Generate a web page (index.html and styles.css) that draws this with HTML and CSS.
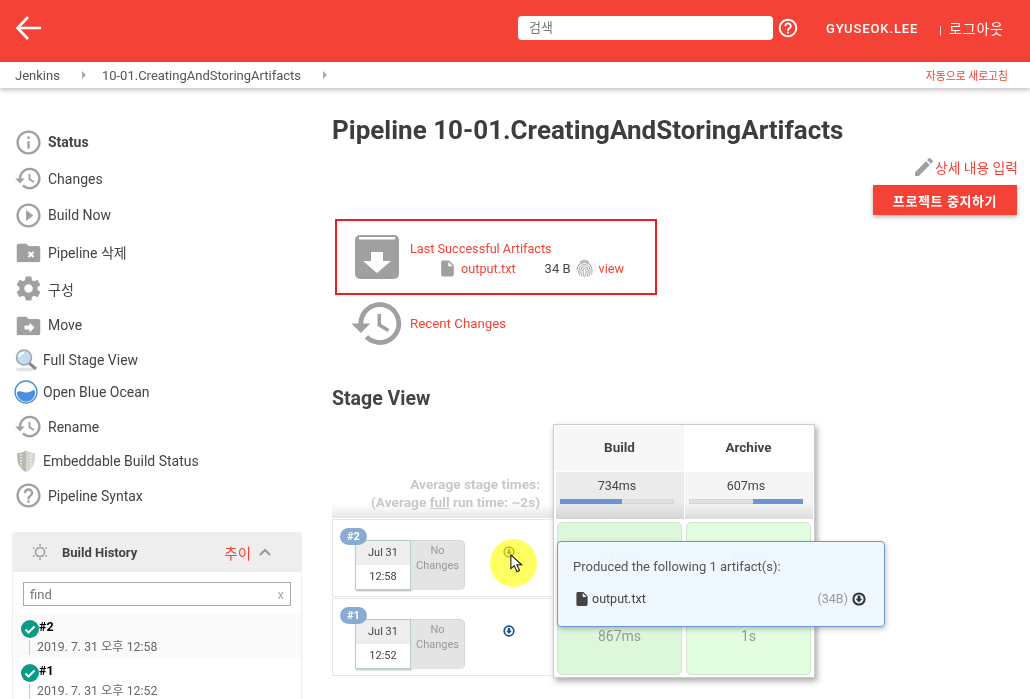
FILE: index.html
```html
<!DOCTYPE html>
<html lang="ko">
<head>
    <meta charset="UTF-8">
    <title>10-01.CreatingAndStoringArtifacts [Jenkins]</title>
    <link rel="stylesheet" href="styles.css">
</head>
<body>
    <svg class="defs" width="0" height="0">
        <symbol id="i-history" viewBox="0 0 24 24"><path d="M13 3c-4.97 0-9 4.03-9 9H1l3.89 3.89.07.14L9 12H6c0-3.87 3.13-7 7-7s7 3.13 7 7-3.13 7-7 7c-1.93 0-3.68-.79-4.94-2.06l-1.42 1.42C8.27 19.99 10.51 21 13 21c4.97 0 9-4.03 9-9s-4.03-9-9-9zm-1 5v5l4.28 2.54.72-1.21-3.5-2.08V8H12z"/></symbol>
        <symbol id="i-help" viewBox="0 0 24 24"><path d="M11 18h2v-2h-2v2zm1-16C6.48 2 2 6.48 2 12s4.48 10 10 10 10-4.48 10-10S17.52 2 12 2zm0 18c-4.41 0-8-3.59-8-8s3.59-8 8-8 8 3.59 8 8-3.59 8-8 8zm0-14c-2.21 0-4 1.79-4 4h2c0-1.1.9-2 2-2s2 .9 2 2c0 2-3 1.75-3 5h2c0-2.25 3-2.5 3-5 0-2.21-1.79-4-4-4z"/></symbol>
        <symbol id="i-file" viewBox="0 0 24 24"><path d="M14 2H6c-1.1 0-2 .9-2 2v16c0 1.1.9 2 2 2h12c1.1 0 2-.9 2-2V8l-6-6zm-1 7V3.5L18.5 9H13z"/></symbol>
        <symbol id="i-folder" viewBox="1 3 22 18"><path d="M10 4H3c-1.1 0-2 .9-2 2v13c0 1.1.9 2 2 2h18c1.1 0 2-.9 2-2V8c0-1.1-.9-2-2-2h-9l-2-2z"/></symbol>
        <symbol id="i-check" viewBox="0 0 18 18"><circle cx="9" cy="9" r="9" fill="#0b9a87"/><path d="M4.5 9.5l3 3 6-6" fill="none" stroke="#fff" stroke-width="2"/></symbol>
        <symbol id="i-download" viewBox="0 0 14 14"><circle cx="7" cy="7" r="5.6" fill="none" stroke="currentColor" stroke-width="2"/><path d="M5.6 3.6h2.8v3.2h2L7 10.4 3.6 6.8h2z" fill="currentColor"/></symbol>
    </svg>

    <header class="topbar">
        <svg class="back" width="26" height="24" viewBox="0 0 26 24"><path d="M12 1L1.500 12 12 23M1.500 12H25" fill="none" stroke="#fff" stroke-width="2.600"/></svg>
        <div class="search">검색</div>
        <svg class="help" width="22" height="22" viewBox="0 0 24 24"><use href="#i-help"/></svg>
        <span class="user">GYUSEOK.LEE</span>
        <span class="logout"><span class="sep">|</span> 로그아웃</span>
    </header>

    <nav class="crumbs">
        <span>Jenkins</span>
        <span class="arrow"></span>
        <span>10-01.CreatingAndStoringArtifacts</span>
        <span class="arrow"></span>
        <a class="refresh">자동으로 새로고침</a>
    </nav>

    <div class="page">
        <aside class="side">
            <ul class="tasks">
                <li class="task"><svg width="29" height="29" viewBox="0 0 24 24"><path d="M11 17h2v-6h-2v6zm1-15C6.48 2 2 6.48 2 12s4.48 10 10 10 10-4.48 10-10S17.52 2 12 2zm0 18c-4.41 0-8-3.59-8-8s3.59-8 8-8 8 3.59 8 8-3.59 8-8 8zM11 9h2V7h-2v2z"/></svg><b>Status</b></li>
                <li class="task"><svg width="29" height="29" viewBox="0 0 24 24"><use href="#i-history"/></svg>Changes</li>
                <li class="task"><svg width="29" height="29" viewBox="0 0 24 24"><path d="M10 16.5l6-4.5-6-4.5v9zM12 2C6.48 2 2 6.48 2 12s4.48 10 10 10 10-4.48 10-10S17.52 2 12 2zm0 18c-4.41 0-8-3.59-8-8s3.59-8 8-8 8 3.59 8 8-3.59 8-8 8z"/></svg>Build Now</li>
                <li class="task"><svg width="29" height="29" viewBox="-1.500 -1.500 29 29"><use href="#i-folder" x="1" y="3" width="24" height="20"/><path d="M13 12.500l5 5m0-5l-5 5" stroke="#fff" stroke-width="2"/></svg>Pipeline 삭제</li>
                <li class="task"><svg width="29" height="29" viewBox="0 0 24 24"><path d="M19.43 12.98c.04-.32.07-.64.07-.98s-.03-.66-.07-.98l2.11-1.65c.19-.15.24-.42.12-.64l-2-3.46c-.12-.22-.39-.3-.61-.22l-2.49 1c-.52-.4-1.08-.73-1.69-.98l-.38-2.65C14.46 2.18 14.25 2 14 2h-4c-.25 0-.46.18-.49.42l-.38 2.65c-.61.25-1.17.59-1.69.98l-2.49-1c-.23-.09-.49 0-.61.22l-2 3.46c-.13.22-.07.49.12.64l2.11 1.65c-.04.32-.07.65-.07.98s.03.66.07.98l-2.11 1.65c-.19.15-.24.42-.12.64l2 3.46c.12.22.39.3.61.22l2.49-1c.52.4 1.08.73 1.69.98l.38 2.65c.03.24.24.42.49.42h4c.25 0 .46-.18.49-.42l.38-2.65c.61-.25 1.17-.59 1.69-.98l2.49 1c.23.09.49 0 .61-.22l2-3.46c.12-.22.07-.49-.12-.64l-2.11-1.65zM12 15.5c-1.93 0-3.5-1.57-3.5-3.5s1.57-3.5 3.5-3.5 3.5 1.57 3.5 3.5-1.57 3.5-3.5 3.5z"/></svg>구성</li>
                <li class="task"><svg width="29" height="29" viewBox="-1.500 -1.500 29 29"><use href="#i-folder" x="1" y="3" width="24" height="20"/><path d="M9 13h5v-3l5 5-5 5v-3H9z" fill="#fff"/></svg>Move</li>
                <li class="task task-small">
                    <svg width="24" height="24" viewBox="0 0 24 24"><ellipse cx="11" cy="21.500" rx="10" ry="2" fill="#e4e4e4"/><path d="M15 15l7 6" stroke="#888" stroke-width="3"/><circle cx="10" cy="9.500" r="7.500" fill="#c5daef" stroke="#9aa7b5" stroke-width="1.600"/><path d="M5 9a5 5 0 0 1 5-4" stroke="#fff" stroke-width="2" fill="none"/></svg>Full Stage View
                </li>
                <li class="task task-small">
                    <svg width="24" height="24" viewBox="0 0 24 24"><circle cx="12" cy="12" r="11" fill="#fff" stroke="#4a90e2" stroke-width="1.400"/><path d="M2.800 12.500c3-2.800 6-.4 9 0s5-1 6.500-2 2.700-.6 2.900 2A9.200 9.200 0 0 1 2.800 12.500z" fill="#4a90e2"/></svg>Open Blue Ocean
                </li>
                <li class="task"><svg width="29" height="29" viewBox="0 0 24 24"><use href="#i-history"/></svg>Rename</li>
                <li class="task task-small">
                    <svg width="24" height="24" viewBox="0 0 24 24"><path d="M12 1.500c3 2 6 2.500 9 2.500 0 9-1 15-9 19-8-4-9-10-9-19 3 0 6-.5 9-2.500z" fill="#b9bab2"/><path d="M12 1.500c3 2 6 2.500 9 2.500 0 9-1 15-9 19z" fill="#d6d7d0"/><path d="M7 5v13M17 5v13" stroke="#f2f2ee" stroke-width="1.500" stroke-dasharray="1.500 1.500"/></svg>Embeddable Build Status
                </li>
                <li class="task"><svg width="29" height="29" viewBox="0 0 24 24"><use href="#i-help"/></svg>Pipeline Syntax</li>
            </ul>

            <section class="history">
                <div class="history-head">
                    <svg width="18" height="18" viewBox="0 0 18 18"><circle cx="9" cy="9" r="4.500" fill="none" stroke="#999" stroke-width="1.500"/><path d="M9 1v2M9 15v2M2 4.500l1.500 1M14.500 12.500l1.500 1M2 13.500l1.500-1M14.500 5.500l1.500-1" stroke="#999" stroke-width="1.500"/></svg>
                    <b>Build History</b>
                    <a class="trend">추이</a>
                    <svg class="chev" width="14" height="10" viewBox="0 0 14 10"><path d="M2 8l5-5 5 5" fill="none" stroke="#999" stroke-width="2"/></svg>
                </div>
                <div class="find"><span>find</span><span class="find-x">x</span></div>
                <div class="build build-odd">
                    <div class="build-num"><svg width="18" height="18"><use href="#i-check"/></svg><b>#2</b></div>
                    <div class="build-date">2019. 7. 31 오후 12:58</div>
                </div>
                <div class="build">
                    <div class="build-num"><svg width="18" height="18"><use href="#i-check"/></svg><b>#1</b></div>
                    <div class="build-date">2019. 7. 31 오후 12:52</div>
                </div>
            </section>
        </aside>

        <main class="main">
            <h1>Pipeline 10-01.CreatingAndStoringArtifacts</h1>

            <div class="actions">
                <div class="edit">
                    <svg width="20" height="20" viewBox="2 2 20 20"><path d="M3 17.250V21h3.750L17.810 9.940l-3.750-3.750L3 17.250zM20.710 7.040c.39-.39.39-1.020 0-1.410l-2.340-2.340c-.39-.39-1.020-.39-1.410 0l-1.830 1.830 3.750 3.750 1.830-1.830z"/></svg>
                    <a>상세 내용 입력</a>
                </div>
                <button class="stop">프로젝트 중지하기</button>
            </div>

            <div class="artifacts">
                <svg width="44" height="44" viewBox="0 0 44 44"><rect width="44" height="44" rx="5" fill="#a0a0a0"/><rect x="4" y="2" width="36" height="2.500" fill="#fff"/><path d="M16 17h12v9h8L22 38 8 26h8z" fill="#fff"/></svg>
                <div class="artifact-text">
                    <a>Last Successful Artifacts</a>
                    <div class="artifact-row">
                        <svg class="artifact-file" width="19" height="19" viewBox="0 0 24 24"><use href="#i-file"/></svg>
                        <a class="artifact-name">output.txt</a>
                        <span class="artifact-size">34 B</span>
                        <svg class="fingerprint" width="17" height="19" viewBox="0 0 17 19" fill="none" stroke="#999" stroke-width=".9"><path d="M2 6.500a7.500 7.500 0 0 1 13 0M1 11a7.500 7.500 0 0 1 15 0c0 2 0 3-.5 4.500M3.500 16c-1-2-.5-4-.5-5a5.500 5.500 0 0 1 11 0c0 2.500 0 4-1 6M6 17.500c-1-2-1.500-4.500-1-6.500a3.500 3.500 0 0 1 7 0c0 2.500 0 5-1 7M8.500 18.500c-1-2.500-1.500-5-1.500-7.500a1.500 1.500 0 0 1 3 0c0 2 0 4-.5 6M4 2.500a9 9 0 0 1 9 0"/></svg>
                        <a>view</a>
                    </div>
                </div>
            </div>

            <div class="changes">
                <svg width="57" height="57" viewBox="0 0 24 24"><use href="#i-history"/></svg>
                <a>Recent Changes</a>
            </div>

            <h2>Stage View</h2>

            <div class="stage">
                <div class="stage-left">
                    <div class="avg">
                        <div>Average stage times:</div>
                        <div>(Average <u>full</u> run time: ~2s)</div>
                    </div>
                    <div class="run">
                        <span class="badge">#2</span>
                        <div class="date"><div class="day">Jul 31</div><div class="time">12:58</div></div>
                        <div class="nochange">No<br>Changes</div>
                        <svg class="run-dl run-dl-faded" width="12" height="12" viewBox="0 0 14 14"><use href="#i-download"/></svg>
                    </div>
                    <div class="run">
                        <span class="badge">#1</span>
                        <div class="date"><div class="day">Jul 31</div><div class="time">12:52</div></div>
                        <div class="nochange">No<br>Changes</div>
                        <svg class="run-dl" width="12" height="12" viewBox="0 0 14 14"><use href="#i-download"/></svg>
                    </div>
                </div>

                <div class="stage-cols">
                    <div class="col col-hover">
                        <div class="col-head">Build</div>
                        <div class="col-avg">734ms<div class="bar"><span class="bar-fill"></span></div></div>
                        <div class="cell">602ms</div>
                        <div class="cell">867ms</div>
                    </div>
                    <div class="col">
                        <div class="col-head">Archive</div>
                        <div class="col-avg">607ms<div class="bar"><span class="bar-fill bar-fill-right"></span></div></div>
                        <div class="cell">68ms</div>
                        <div class="cell">1s</div>
                    </div>
                </div>

                <div class="highlight"></div>
                <svg class="cursor" width="13" height="19" viewBox="0 0 15 22"><path d="M1 1v16l4-3.500 3 7 3-1.500-3-6.500h5.500z" fill="#fff" stroke="#111" stroke-width="1.200"/></svg>

                <div class="popup">
                    <p>Produced the following 1 artifact(s):</p>
                    <div class="popup-row">
                        <svg width="12" height="14" viewBox="4 2 16 20"><use href="#i-file" x="0" y="0" width="24" height="24"/></svg>
                        <span class="popup-name">output.txt</span>
                        <span class="popup-size">(34B)</span>
                        <svg class="popup-dl" width="14" height="14"><use href="#i-download"/></svg>
                    </div>
                </div>
            </div>
        </main>
    </div>
</body>
</html>
```

FILE: styles.css
```css
* {
    box-sizing: border-box;
}
html, body {
    height: 699px;
    overflow: hidden;
}
body {
    margin: 0;
    font-family: Roboto, "Noto Sans CJK KR", sans-serif;
    font-size: 14px;
    color: #444;
    background: #fff;
}
a {
    color: #f44336;
}
.defs {
    position: absolute;
}

.topbar {
    height: 62px;
    background: #f44336;
    color: #fff;
    display: flex;
    align-items: center;
    padding: 0 0 6px 16px;
    white-space: nowrap;
}
.back {
    flex-shrink: 0;
}
.search {
    width: 255px;
    flex-shrink: 0;
    height: 24px;
    margin-left: 476px;
    padding-left: 11px;
    background: #fff;
    border-radius: 4px;
    color: #777;
    font-size: 13px;
    line-height: 24px;
}
.help {
    margin-left: 4px;
    fill: #fff;
    flex-shrink: 0;
}
.user {
    margin-left: 27px;
    font-size: 13px;
    font-weight: 500;
    letter-spacing: .9px;
}
.logout {
    margin-left: 21px;
    font-size: 14px;
    letter-spacing: .8px;
}
.sep {
    font-size: 11px;
    margin-right: 2px;
}

.crumbs {
    height: 26px;
    display: flex;
    align-items: center;
    padding: 0 22px 0 15px;
    font-size: 13px;
    color: #555;
    box-shadow: 0 2px 5px rgba(0, 0, 0, .25);
    position: relative;
}
.arrow {
    width: 0;
    height: 0;
    margin: 0 16px 0 22px;
    border-left: 4px solid #aaa;
    border-top: 4px solid transparent;
    border-bottom: 4px solid transparent;
}
.refresh {
    margin-left: auto;
    font-size: 10.800px;
}

.page {
    display: flex;
}
.side {
    width: 332px;
    flex-shrink: 0;
    padding-top: 36px;
}
.tasks {
    list-style: none;
    margin: 0;
    padding: 0 0 0 14px;
}
.task {
    height: 36.600px;
    display: flex;
    align-items: center;
    gap: 5px;
    font-size: 14px;
}
.task svg {
    fill: #a0a0a0;
    flex-shrink: 0;
}
.task-small {
    height: 32.500px;
    gap: 5px;
}

.history {
    width: 290px;
    margin: 18px 0 0 12px;
    border: 1px solid #eee;
    border-top: 0;
}
.history-head {
    height: 40px;
    background: #eee;
    border-radius: 4px 4px 0 0;
    display: flex;
    align-items: center;
    padding: 0 29px 0 18px;
    font-size: 13px;
}
.history-head b {
    margin-left: 13px;
}
.trend {
    margin-left: auto;
    font-size: 14.500px;
}
.chev {
    margin-left: 7px;
}
.find {
    height: 24px;
    margin: 10px 10px 8px;
    padding: 0 6px;
    border: 1px solid #aaa;
    display: flex;
    justify-content: space-between;
    align-items: center;
    font-size: 13px;
    color: #777;
}
.find-x {
    color: #aaa;
}
.build {
    height: 44px;
    padding: 5px 0 0 8px;
}
.build-odd {
    background: #fafafa;
}
.build-num {
    display: flex;
    font-size: 12.500px;
    color: #000;
    height: 20px;
}
.build-num svg {
    margin-top: 1px;
}
.build-date {
    margin: 1px 0 0 8px;
    padding-left: 7px;
    border-left: 1px solid #ccc;
    font-size: 12.300px;
    line-height: 15px;
    color: #666;
}

.main {
    flex: 1;
    padding-top: 26px;
    position: relative;
}
h1 {
    margin: 0;
    font-size: 26px;
    line-height: 32px;
    font-weight: 700;
    color: #3d3d3d;
}
.actions {
    position: absolute;
    top: 69px;
    right: 13px;
    display: flex;
    flex-direction: column;
    align-items: flex-end;
    gap: 8px;
}
.edit {
    display: flex;
    align-items: center;
    font-size: 13.800px;
    margin-right: -1px;
}
.edit svg {
    fill: #a0a0a0;
    margin-right: 1px;
}
.stop {
    width: 144px;
    height: 30px;
    border: 0;
    background: #f44336;
    color: #fff;
    font-family: inherit;
    font-size: 13px;
    font-weight: 700;
    letter-spacing: .6px;
    box-shadow: 0 2px 4px rgba(0, 0, 0, .3);
}

.artifacts {
    width: 322px;
    height: 76px;
    margin: 73px 0 0 3px;
    border: 2px solid #ed1c24;
    display: flex;
    align-items: center;
    padding-left: 18px;
    gap: 11px;
    font-size: 12.700px;
}
.artifact-text {
    padding-top: 4px;
}
.artifact-text a {
    display: inline-block;
}
.artifact-row {
    display: flex;
    align-items: center;
    margin-top: 3px;
}
.artifact-file {
    fill: #a0a0a0;
    margin-left: 28px;
}
.artifact-name {
    margin-left: 4px;
}
.artifact-size {
    margin-left: 29px;
    margin-right: 5px;
    font-size: 13px;
}
.fingerprint {
    margin-right: 6px;
}
.changes {
    display: flex;
    align-items: center;
    height: 52px;
    margin: 2px 0 0 17px;
    gap: 4px;
    font-size: 13.300px;
}
.changes svg {
    fill: #a0a0a0;
    flex-shrink: 0;
}

h2 {
    margin: 37px 0 12px;
    font-size: 19.500px;
    line-height: 26px;
    font-weight: 700;
    color: #444;
}

.stage {
    position: relative;
    display: flex;
    align-items: flex-start;
}
.stage-left {
    width: 221px;
    padding-top: 47px;
}
.avg {
    height: 47px;
    padding: 4px 13px 0 0;
    text-align: right;
    font-weight: 700;
    font-size: 13.700px;
    line-height: 18px;
    color: #c8c8c8;
    background: linear-gradient(#fff 70%, #e6e6e6);
}
.run {
    position: relative;
    height: 78px;
    margin-top: 1px;
    padding: 20px 0 0 22px;
    display: flex;
    align-items: flex-start;
    border: 1px solid #e6e6e6;
    border-right: 0;
}
.badge {
    position: absolute;
    top: 8px;
    left: 7px;
    width: 27px;
    height: 17px;
    border-radius: 9px;
    background: #8aabd0;
    color: #fff;
    font-size: 11px;
    font-weight: 700;
    line-height: 17px;
    text-align: center;
}
.date {
    width: 56px;
    height: 50px;
    border: 1px solid #b6cfc0;
    box-shadow: 1px 1px 2px rgba(0, 0, 0, .3);
    text-align: center;
    font-size: 11px;
    color: #444;
    line-height: 24px;
}
.day {
    background: #eee;
}
.nochange {
    width: 54px;
    height: 50px;
    padding-top: 2px;
    background: #e4e4e4;
    border-radius: 0 5px 5px 0;
    border-right: 1px solid #d6d6d6;
    border-top: 1px solid #d6d6d6;
    color: #999;
    font-size: 11px;
    line-height: 15px;
    text-align: center;
}
.run-dl {
    position: absolute;
    top: 26px;
    left: 170px;
    color: #1d4f91;
}
.run-dl-faded {
    color: #bdbf50;
}

.stage-cols {
    width: 262px;
    height: 254px;
    display: flex;
    border: 1px solid #ccc;
    padding: 0 1px;
    box-shadow: 2px 3px 6px rgba(0, 0, 0, .35);
    background: #fff;
}
.col {
    width: 130px;
}
.col-head {
    height: 46px;
    line-height: 45px;
    text-align: center;
    font-size: 13.500px;
    font-weight: 700;
}
.col-hover .col-head {
    background: #f7f7f7;
}
.col-avg {
    height: 47px;
    margin: 1px 0 0;
    padding: 6px 10px 0 4px;
    text-align: center;
    font-size: 12.500px;
    line-height: 16px;
    background: linear-gradient(#f5f5f5 65%, #dcdcdc);
    border-left: 1px solid #fff;
}
.col-hover .col-avg {
    background: linear-gradient(#ebebeb 65%, #d4d4d4);
}
.bar {
    height: 5px;
    margin-top: 5px;
    background: #e0e0e0;
    border: 1px solid #d4d4d4;
    display: flex;
}
.bar-fill {
    width: 55%;
    margin: -1px;
    background: #6a94d4;
}
.bar-fill-right {
    width: 45%;
    margin-left: auto;
}
.cell {
    height: 78px;
    margin: 3px 2px 0;
    padding-top: 26px;
    background: #e3fde0;
    border: 1px solid #d2e6d0;
    border-radius: 5px;
    text-align: center;
    font-size: 14px;
    color: #999;
}
.cell + .cell {
    height: 76px;
    margin-top: -1px;
    padding-top: 28px;
}
.col-hover .cell {
    background: #ddf7da;
}

.highlight {
    position: absolute;
    left: 158px;
    top: 115px;
    width: 47px;
    height: 48px;
    border-radius: 50%;
    background: #ffff50;
    opacity: .9;
    mix-blend-mode: multiply;
}
.cursor {
    position: absolute;
    left: 178px;
    top: 130px;
}
.popup {
    position: absolute;
    left: 225px;
    top: 117px;
    width: 328px;
    height: 86px;
    padding: 17px 15px;
    background: rgba(238, 248, 255, .96);
    border: 1px solid #6a9ad4;
    border-radius: 4px;
    box-shadow: 1px 2px 5px rgba(0, 0, 0, .25);
    font-size: 12.500px;
}
.popup p {
    margin: 0;
    font-size: 13px;
    line-height: 16px;
    color: #555;
}
.popup-row {
    display: flex;
    align-items: center;
    margin-top: 16px;
    padding: 0 3px;
}
.popup-row svg {
    fill: #444;
    flex-shrink: 0;
}
.popup-name {
    margin-left: 4px;
}
.popup-size {
    margin-left: auto;
    color: #999;
}
.popup-dl {
    margin-left: 4px;
    color: #333;
}
```
